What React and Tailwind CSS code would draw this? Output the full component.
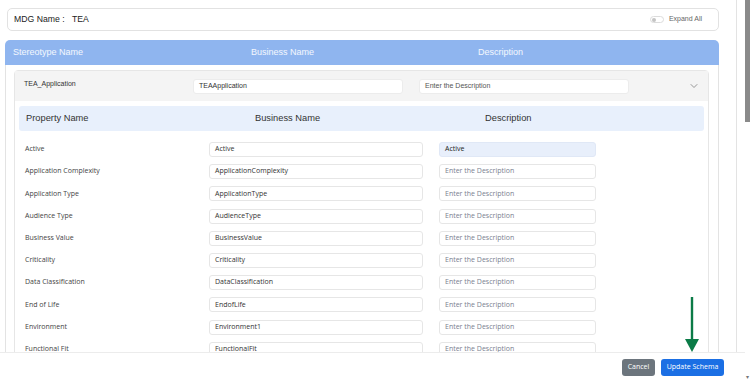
import React from 'react';
import { ChevronDown } from 'lucide-react';

const rows = [
  ['Active', 'Active'],
  ['Application Complexity', 'ApplicationComplexity'],
  ['Application Type', 'ApplicationType'],
  ['Audience Type', 'AudienceType'],
  ['Business Value', 'BusinessValue'],
  ['Criticality', 'Criticality'],
  ['Data Classification', 'DataClassification'],
  ['End of Life', 'EndofLife'],
  ['Environment', 'Environment1'],
  ['Functional Fit', 'FunctionalFit'],
];

const arial = { fontFamily: '"Liberation Sans", Arial, sans-serif' };
const soft = { fontFamily: '"Open Sans", "Noto Sans", sans-serif' };

export default function App() {
  return (
    <div className="w-[750px] h-[382px] flex bg-white overflow-hidden relative" style={arial}>
      {/* page */}
      <div className="w-[745px] h-full flex flex-col">
        <div className="flex-1 flex overflow-hidden">
          <div className="w-[737px] border-r border-[#e3e3e3] pt-[8px]">
            {/* MDG name card */}
            <div className="ml-[7px] w-[712px] h-[23px] border border-[#e2e2e2] rounded-[5px] flex items-center pl-[6px] pr-[16px]">
              <span className="text-[8.7px] text-[#222]">MDG Name :&nbsp;&nbsp;&nbsp;TEA</span>
              <div className="ml-auto flex items-center gap-[5px]">
                <div className="w-[14px] h-[7px] rounded-full border border-[#dcdcdc] flex items-center pl-[1px]">
                  <div className="w-[4px] h-[4px] rounded-full bg-[#c4c4c4]" />
                </div>
                <span className="text-[7px] text-[#666]">Expand All</span>
              </div>
            </div>

            {/* outer table */}
            <div className="ml-[5px] w-[714px] mt-[9px]">
              <div className="h-[25px] bg-[#8fb5ef] rounded-t-[5px] flex items-center text-[9px] text-white/90">
                <span className="w-[238px] pl-[8px]">Stereotype Name</span>
                <span className="w-[227px] pl-[8px]">Business Name</span>
                <span className="pl-[8px]">Description</span>
              </div>
              <div className="border-x border-[#e3e3e3] pt-[5px] pl-[8px] pr-[9px] h-[400px]">
                {/* accordion item */}
                <div className="border border-[#e6e6e6] rounded-[4px] h-[400px]">
                  <div className="h-[30px] bg-[#f4f4f4] flex items-center pl-[9px] pr-[8px]">
                    <span className="w-[169px] text-[7px] text-[#333] -mt-[4px]">TEA_Application</span>
                    <div className="w-[210px] h-[15px] bg-white border border-[#ececec] rounded-[3px] flex items-center pl-[5px] text-[7px] text-[#333]">TEAApplication</div>
                    <div className="ml-[16px] w-[210px] h-[15px] bg-white border border-[#ececec] rounded-[3px] flex items-center pl-[5px] text-[7px] text-[#555]">Enter the Description</div>
                    <ChevronDown className="ml-auto text-[#777]" size={12} strokeWidth={1.5} />
                  </div>
                  <div className="px-[4px] pt-[5px]">
                    <div className="h-[25px] bg-[#e8f0fc] rounded-[3px] flex items-center text-[9.3px] text-[#333]">
                      <span className="w-[236px] pl-[7px]">Property Name</span>
                      <span className="w-[224px]">Business Name</span>
                      <span className="pl-[6px]">Description</span>
                    </div>
                    <div className="pt-[11px] flex flex-col gap-[7.2px]" style={soft}>
                      {rows.map(([label, value], i) => (
                        <div key={label} className="h-[15px] flex items-center text-[7px]">
                          <span className="w-[190px] pl-[6px] text-[#444]">{label}</span>
                          <div className="w-[214px] h-[15px] border border-[#e6e6e6] rounded-[3px] flex items-center pl-[5px] text-[#333]">{value}</div>
                          {i === 0 ? (
                            <div className="ml-[16px] w-[157px] h-[15px] bg-[#e8effb] border border-[#e0e8f6] rounded-[3px] flex items-center pl-[5px] text-[#222]">Active</div>
                          ) : (
                            <div className="ml-[16px] w-[157px] h-[15px] bg-white border border-[#e6e6e6] rounded-[3px] flex items-center pl-[5px] text-[#7a8090]">Enter the Description</div>
                          )}
                        </div>
                      ))}
                    </div>
                  </div>
                </div>
              </div>
            </div>
          </div>
        </div>
        {/* footer */}
        <div className="h-[30px] shrink-0 border-t border-[#ececec] bg-white flex items-center justify-end gap-[6px] pr-[21px] pb-[1px]" style={soft}>
          <button className="w-[33px] h-[17px] bg-[#6c757d] text-white text-[7px] rounded-[3px]">Cancel</button>
          <button className="w-[63px] h-[17px] bg-[#1b6fe4] text-white text-[7px] rounded-[3px]">Update Schema</button>
        </div>
      </div>

      {/* scrollbar */}
      <div className="w-[5px] h-full flex flex-col">
        <div className="h-[122px] bg-[#8a8a8a]" />
        <div className="flex-1" />
        <div className="h-[8px] text-[6px] leading-none text-[#777] text-center">▾</div>
      </div>

      {/* annotation arrow */}
      <svg className="absolute left-[684px] top-[297px]" width="16" height="56" viewBox="0 0 16 56">
        <line x1="8" y1="0" x2="8" y2="44" stroke="#0b7b47" strokeWidth="2.4" />
        <polygon points="1,42 15,42 8,55" fill="#0b7b47" />
      </svg>
    </div>
  );
}
